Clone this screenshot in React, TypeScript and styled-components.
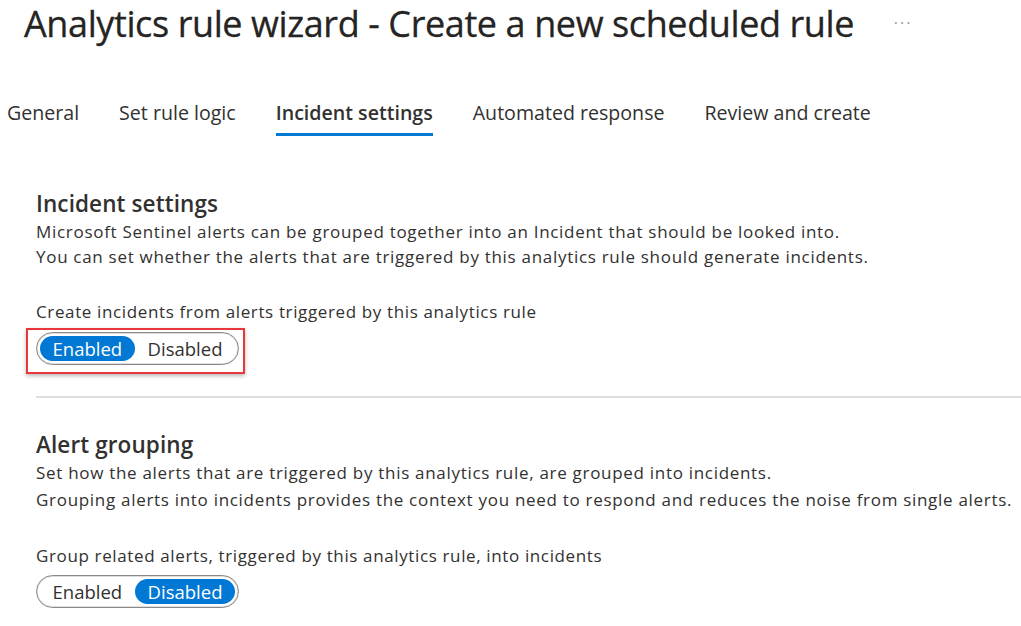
import React from "react";
import styled, { createGlobalStyle } from "styled-components";

const Global = createGlobalStyle`
  html, body { margin: 0; padding: 0; background: #ffffff; }
  body { font-family: "Open Sans", "Noto Sans", "Liberation Sans", sans-serif; color: #323130; }
  * { box-sizing: border-box; }
`;

const Page = styled.div`
  width: 1021px;
  height: 626px;
  overflow: hidden;
  display: flex;
  flex-direction: column;
`;

const TitleRow = styled.div`
  display: flex;
  align-items: center;
  height: 46px;
  padding-left: 24px;
  gap: 40px;
`;

const Title = styled.h1`
  margin: 0;
  font-size: 36px;
  font-weight: 400;
  letter-spacing: -0.4px;
  color: #252423;
  white-space: nowrap;
  -webkit-text-stroke: 0.3px #252423;
`;

const More = styled.span`
  font-size: 14px;
  color: #8a8886;
  letter-spacing: 2.5px;
  margin-top: -2px;
`;

const Tabs = styled.nav`
  display: flex;
  margin-top: 42px;
  padding-left: 7px;
  gap: 40px;
`;

const Tab = styled.div<{ $active?: boolean }>`
  position: relative;
  height: 48px;
  display: flex;
  align-items: center;
  font-size: 19.6px;
  font-weight: ${(p) => (p.$active ? 600 : 400)};
  letter-spacing: 0;
  color: #323130;
  white-space: nowrap;
  &::after {
    content: "";
    display: ${(p) => (p.$active ? "block" : "none")};
    position: absolute;
    left: 0;
    right: 0;
    bottom: 0;
    height: 3px;
    background: #0078d4;
  }
`;

const Section = styled.section<{ $top: number }>`
  padding-left: 36px;
  margin-top: ${(p) => p.$top}px;
  display: flex;
  flex-direction: column;
`;

const Heading = styled.h2<{ $gap?: number }>`
  margin: 0 0 ${(p) => p.$gap ?? 0}px;
  font-size: 22.5px;
  font-weight: 600;
  letter-spacing: 0.1px;
  line-height: 28px;
  color: #323130;
`;

const Desc = styled.p<{ $lh: number }>`
  margin: 0;
  font-size: 17px;
  line-height: ${(p) => p.$lh}px;
  letter-spacing: 0.7px;
  color: #323130;
  white-space: nowrap;
`;

const Label = styled.div`
  margin-top: 31px;
  font-size: 17px;
  line-height: 24px;
  letter-spacing: 0.63px;
  color: #323130;
  white-space: nowrap;
`;

const Highlight = styled.div`
  align-self: flex-start;
  margin-left: -10px;
  margin-top: 4px;
  padding: 2px 4px 7px 8px;
  border: 2px solid #e8363b;
  box-shadow: 0 2px 4px rgba(0, 0, 0, 0.28);
`;

const Toggle = styled.div<{ $spaced?: boolean }>`
  align-self: flex-start;
  display: flex;
  align-items: center;
  justify-content: space-between;
  width: 203px;
  height: 33px;
  padding: 0 3px;
  border: 1px solid #8a8886;
  border-radius: 17px;
  box-shadow: inset 0 0 0 1px #e1dfdd;
  margin-top: ${(p) => (p.$spaced ? "7px" : "0")};
`;

const Option = styled.div<{ $on?: boolean }>`
  height: 25px;
  display: flex;
  align-items: center;
  padding: 0 12.5px;
  border-radius: 13px;
  font-size: 18.5px;
  letter-spacing: 0;
  background: ${(p) => (p.$on ? "#0078d4" : "transparent")};
  color: ${(p) => (p.$on ? "#ffffff" : "#323130")};
  white-space: nowrap;
`;

const Divider = styled.hr`
  margin: 22px 0 0 36px;
  border: none;
  height: 2px;
  background: #e1dfdd;
`;

export default function App() {
  return (
    <Page>
      <Global />
      <TitleRow>
        <Title>Analytics rule wizard - Create a new scheduled rule</Title>
        <More>···</More>
      </TitleRow>
      <Tabs>
        <Tab>General</Tab>
        <Tab>Set rule logic</Tab>
        <Tab $active>Incident settings</Tab>
        <Tab>Automated response</Tab>
        <Tab>Review and create</Tab>
      </Tabs>
      <Section $top={54}>
        <Heading $gap={1}>Incident settings</Heading>
        <Desc $lh={25}>Microsoft Sentinel alerts can be grouped together into an Incident that should be looked into.</Desc>
        <Desc $lh={25}>You can set whether the alerts that are triggered by this analytics rule should generate incidents.</Desc>
        <Label>Create incidents from alerts triggered by this analytics rule</Label>
        <Highlight>
          <Toggle>
            <Option $on>Enabled</Option>
            <Option>Disabled</Option>
          </Toggle>
        </Highlight>
      </Section>
      <Divider />
      <Section $top={33}>
        <Heading>Alert grouping</Heading>
        <Desc $lh={27}>Set how the alerts that are triggered by this analytics rule, are grouped into incidents.</Desc>
        <Desc $lh={27}>Grouping alerts into incidents provides the context you need to respond and reduces the noise from single alerts.</Desc>
        <Label>Group related alerts, triggered by this analytics rule, into incidents</Label>
        <Toggle $spaced>
          <Option>Enabled</Option>
          <Option $on>Disabled</Option>
        </Toggle>
      </Section>
    </Page>
  );
}
